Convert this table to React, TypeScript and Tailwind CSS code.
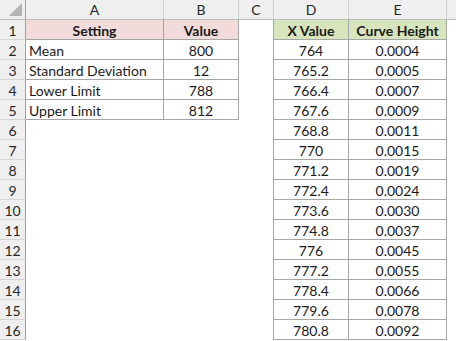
const settings = [
  ["Mean", "800"],
  ["Standard Deviation", "12"],
  ["Lower Limit", "788"],
  ["Upper Limit", "812"],
];

const curve = [
  ["764", "0.0004"],
  ["765.2", "0.0005"],
  ["766.4", "0.0007"],
  ["767.6", "0.0009"],
  ["768.8", "0.0011"],
  ["770", "0.0015"],
  ["771.2", "0.0019"],
  ["772.4", "0.0024"],
  ["773.6", "0.0030"],
  ["774.8", "0.0037"],
  ["776", "0.0045"],
  ["777.2", "0.0055"],
  ["778.4", "0.0066"],
  ["779.6", "0.0078"],
  ["780.8", "0.0092"],
];

const font = { fontFamily: "Lato, 'Open Sans', sans-serif" };

const App = () => {
  const rows = Array.from({ length: 16 }, (_, i) => i + 1);
  return (
    <div className="w-[456px] h-[341px] bg-white overflow-hidden text-[14px] text-[#1a1a1a]" style={font}>
      {/* column headers */}
      <div className="flex h-[20px] bg-[#efefef] border-b border-[#bdbdbd] text-[#262626]">
        <div className="w-[26px] shrink-0 relative border-r border-[#9e9e9e]">
          <div className="absolute right-[3px] bottom-[3px] w-0 h-0 border-l-[13px] border-l-transparent border-b-[13px] border-b-[#b4b4b4]" />
        </div>
        <div className="w-[138px] shrink-0 border-r border-[#d0d0d0] flex items-center justify-center leading-none pt-[1px]">A</div>
        <div className="w-[75px] shrink-0 border-r border-[#d0d0d0] flex items-center justify-center leading-none pt-[1px]">B</div>
        <div className="w-[35px] shrink-0 border-r border-[#d0d0d0] flex items-center justify-center leading-none pt-[1px]">C</div>
        <div className="w-[75px] shrink-0 border-r border-[#d0d0d0] flex items-center justify-center leading-none pt-[1px]">D</div>
        <div className="w-[98px] shrink-0 border-r border-[#d0d0d0] flex items-center justify-center leading-none pt-[1px]">E</div>
        <div className="flex-1" />
      </div>

      {rows.map((r) => {
        const s = r >= 2 && r <= 5 ? settings[r - 2] : null;
        const c = r >= 2 ? curve[r - 2] : null;
        const inLeft = r <= 5;
        const head = r === 1;
        return (
          <div key={r} className="flex h-[20px]">
            <div className="w-[26px] shrink-0 bg-[#efefef] border-r border-b border-r-[#9e9e9e] border-b-[#d4d4d4] flex items-center justify-center leading-none pt-[2px] text-[#262626]">
              {r}
            </div>
            {inLeft ? (
              <>
                <div
                  className={`w-[138px] shrink-0 border-r border-b border-[#a6a6a6] flex items-center leading-none pt-[2px] ${
                    head ? "bg-[#f2dcdb] justify-center font-bold" : "pl-[3px]"
                  }`}
                >
                  {head ? "Setting" : s?.[0]}
                </div>
                <div
                  className={`w-[75px] shrink-0 border-r border-b border-[#a6a6a6] flex items-center justify-center leading-none pt-[2px] ${
                    head ? "bg-[#f2dcdb] font-bold" : ""
                  }`}
                >
                  {head ? "Value" : s?.[1]}
                </div>
              </>
            ) : (
              <div className="w-[213px] shrink-0" />
            )}
            <div className="w-[35px] shrink-0 border-r border-[#a6a6a6]" />
            <div
              className={`w-[75px] shrink-0 border-r border-b border-[#a6a6a6] flex items-center justify-center leading-none pt-[2px] ${
                head ? "bg-[#d8e4bc] font-bold" : ""
              }`}
            >
              {head ? "X Value" : c?.[0]}
            </div>
            <div
              className={`w-[98px] shrink-0 border-r border-b border-[#a6a6a6] flex items-center justify-center leading-none pt-[2px] ${
                head ? "bg-[#d8e4bc] font-bold" : ""
              }`}
            >
              {head ? "Curve Height" : c?.[1]}
            </div>
            <div className="flex-1" />
          </div>
        );
      })}
    </div>
  );
};

export default App;
